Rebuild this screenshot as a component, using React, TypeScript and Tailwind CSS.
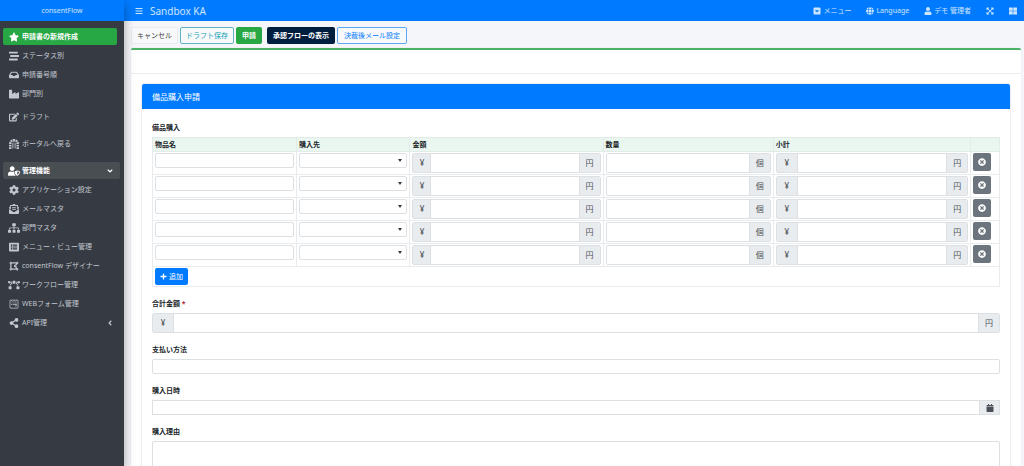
import { useState, type ReactNode } from "react";
import {
    FaStar, FaStream, FaInbox, FaIndustry, FaEdit, FaDungeon, FaUserShield, FaCog, FaEnvelopeOpenText,
    FaSitemap, FaListAlt, FaDrawPolygon, FaBezierCurve, FaWpforms, FaShareAlt, FaAngleDown, FaAngleLeft,
    FaBars, FaCaretSquareDown, FaGlobe, FaUser, FaExpandArrowsAlt, FaThLarge, FaPlus, FaTimesCircle, FaCalendar,
} from "react-icons/fa";
import type { IconType } from "react-icons";

interface MenuItem {
    label: string;
    icon: IconType;
    wide?: boolean; // ícones 640x512 precisam de mais largura
}

const viewMenu: MenuItem[] = [
    { label: "ステータス別", icon: FaStream },
    { label: "申請番号順", icon: FaInbox },
    { label: "部門別", icon: FaIndustry },
];

const adminMenu: MenuItem[] = [
    { label: "アプリケーション設定", icon: FaCog },
    { label: "メールマスタ", icon: FaEnvelopeOpenText },
    { label: "部門マスタ", icon: FaSitemap, wide: true },
    { label: "メニュー・ビュー管理", icon: FaListAlt },
    { label: "consentFlow デザイナー", icon: FaDrawPolygon },
    { label: "ワークフロー管理", icon: FaBezierCurve, wide: true },
    { label: "WEBフォーム管理", icon: FaWpforms },
];

const NavLink = ({ item, className = "text-[#c2c7d0]", children }: { item: MenuItem; className?: string; children?: ReactNode }) => {
    const Icon = item.icon;
    return (
        <a href="#" className={`flex h-[17px] items-center rounded-xs pl-[5px] pr-[6px] ${className}`}>
            <span className="mr-[2px] flex w-[12px] shrink-0 justify-center">
                <Icon className={item.wide ? "size-[12px]" : "size-[10px]"} />
            </span>
            <span className="flex-1 whitespace-nowrap">{item.label}</span>
            {children}
        </a>
    );
};

const Sidebar = () => (
    <aside className="z-10 flex w-[124px] shrink-0 flex-col bg-[#363b43] shadow-[0_4px_10px_rgba(0,0,0,0.35)]">
        <a href="#" className="flex h-[21px] shrink-0 items-center justify-center bg-[#007bff] text-white/80">consentFlow</a>
        <nav className="flex flex-col gap-[2px] pl-[3px] pr-[4px] pt-[7px]">
            <NavLink item={{ label: "申請書の新規作成", icon: FaStar }} className="mr-[3px] bg-[#28a745] font-bold text-white" />
            {viewMenu.map((item) => <NavLink key={item.label} item={item} />)}
            <div className="pt-[4px]">
                <NavLink item={{ label: "ドラフト", icon: FaEdit }} />
            </div>
            <div className="pt-[8px]">
                <NavLink item={{ label: "ポータルへ戻る", icon: FaDungeon }} />
            </div>
            <div className="pt-[8px]">
                <NavLink item={{ label: "管理機能", icon: FaUserShield, wide: true }} className="bg-[#494e53] font-bold text-white">
                    <FaAngleDown className="size-[8px]" />
                </NavLink>
            </div>
            {adminMenu.map((item) => <NavLink key={item.label} item={item} />)}
            <NavLink item={{ label: "API管理", icon: FaShareAlt }}>
                <FaAngleLeft className="size-[8px]" />
            </NavLink>
        </nav>
    </aside>
);

const Topbar = () => (
    <header className="flex h-[21px] shrink-0 items-center bg-[#007bff] pl-[11px] pr-[7px] text-white/80">
        <button type="button" aria-label="Toggle"><FaBars className="size-[8px]" /></button>
        <h1 className="ml-[7px] text-[10px]">Sandbox KA</h1>
        <nav className="ml-auto flex items-center gap-[15px]">
            <a href="#" className="flex items-center gap-[2px]"><FaCaretSquareDown className="size-[8px]" />メニュー</a>
            <a href="#" className="flex items-center gap-[2px]"><FaGlobe className="size-[8px]" />Language</a>
            <a href="#" className="flex items-center gap-[2px]"><FaUser className="size-[8px]" />デモ 管理者</a>
            <a href="#" aria-label="Fullscreen"><FaExpandArrowsAlt className="size-[8px]" /></a>
            <a href="#" aria-label="Apps"><FaThLarge className="size-[8px]" /></a>
        </nav>
    </header>
);

const Toolbar = () => (
    <div className="flex h-[17px] shrink-0">
        <button type="button" className="rounded-xs border border-[#e9ebed] bg-[#f8f9fa] px-[5px] text-[#444444]">キャンセル</button>
        <button type="button" className="ml-[2px] rounded-xs border border-[#5fb5c4] bg-[#f8f9fa] px-[5px] text-[#17a2b8]">ドラフト保存</button>
        <button type="button" className="ml-[2px] rounded-xs bg-[#28a745] px-[6px] font-bold text-white">申請</button>
        <button type="button" className="ml-[5px] rounded-xs bg-[#001f3f] px-[6px] font-bold text-white">承認フローの表示</button>
        <button type="button" className="ml-[2px] rounded-xs border border-[#5ba7f5] bg-[#f8f9fa] px-[6px] text-[#007bff]">決裁後メール設定</button>
    </div>
);

interface UnitInputProps {
    id?: string;
    label?: string;
    prefix?: string;
    suffix: string;
    wide?: boolean;
}

const UnitInput = ({ id, label, prefix, suffix, wide }: UnitInputProps) => {
    const addon = "flex shrink-0 items-center justify-center bg-[#e9ecef] text-[8px] text-[#495057]";
    return (
        <div className="flex h-[20px] overflow-hidden rounded-xs border border-[#dde0e3]">
            {prefix && <span className={`${addon} border-r border-[#dde0e3] ${wide ? "w-[21px]" : "w-[18px]"}`}>{prefix}</span>}
            <input id={id} aria-label={label} type="text" className="w-0 min-w-0 flex-1 bg-white px-1 outline-none" />
            <span className={`${addon} w-[21px] border-l border-[#dde0e3]`}>{suffix}</span>
        </div>
    );
};

const columns = [
    { label: "物品名", width: "w-[17%]" },
    { label: "購入先", width: "w-[13.4%]" },
    { label: "金額", width: "w-[22.8%]" },
    { label: "数量", width: "w-[20.1%]" },
    { label: "小計", width: "w-[23.3%]" },
    { label: "", width: "w-[3.4%]" },
];

const ItemTable = () => {
    const [rows, setRows] = useState<number[]>([1, 2, 3, 4, 5]);

    const addRow = () => setRows([...rows, Math.max(0, ...rows) + 1]);
    const removeRow = (id: number) => setRows(rows.filter((row) => row !== id));

    const cell = "border border-[#e9ecef] px-[2px] py-px align-top";

    return (
        <table className="w-full table-fixed border-collapse">
            <thead>
                <tr className="h-[14px] bg-[#eaf7f1] text-left">
                    {columns.map((column) => (
                        <th key={column.label} className={`border border-[#e3ebe8] px-[2px] ${column.width}`}>{column.label}</th>
                    ))}
                </tr>
            </thead>
            <tbody>
                {rows.map((id) => (
                    <tr key={id} className="h-[23px]">
                        <td className={cell}>
                            <input type="text" aria-label="物品名" className="block h-[15px] w-full rounded-xs border border-[#dde0e3] px-1" />
                        </td>
                        <td className={cell}>
                            <div className="relative">
                                <select aria-label="購入先" className="block h-[15px] w-full appearance-none rounded-xs border border-[#dde0e3] bg-white px-1">
                                    <option></option>
                                </select>
                                <span className="pointer-events-none absolute right-[5px] top-[6px] border-x-2 border-t-3 border-x-transparent border-t-[#343a40]" />
                            </div>
                        </td>
                        <td className={cell}><UnitInput label="金額" prefix="¥" suffix="円" /></td>
                        <td className={cell}><UnitInput label="数量" suffix="個" /></td>
                        <td className={cell}><UnitInput label="小計" prefix="¥" suffix="円" wide /></td>
                        <td className={cell}>
                            <button type="button" aria-label="削除" onClick={() => removeRow(id)} className="flex h-[18px] w-[18px] items-center justify-center rounded-xs bg-[#6c757d] text-white">
                                <FaTimesCircle className="size-[8px]" />
                            </button>
                        </td>
                    </tr>
                ))}
                <tr>
                    <td colSpan={6} className="border border-[#e9ecef] px-[2px] py-px">
                        <button type="button" onClick={addRow} className="flex h-[17px] items-center gap-[2px] rounded-xs bg-[#007bff] px-[5px] text-white">
                            <FaPlus className="size-[7px]" />追加
                        </button>
                    </td>
                </tr>
            </tbody>
        </table>
    );
};

const App = () => {
    return (
        <div className="flex h-screen overflow-hidden bg-[#f4f6f9] font-['Noto_Sans','Noto_Sans_CJK_JP',sans-serif] text-[7px] leading-[10px] text-[#212529]">
            <Sidebar />
            <div className="flex min-w-0 flex-1 flex-col">
                <Topbar />
                <main className="flex min-h-0 flex-1 flex-col overflow-y-auto pl-[7px] pr-[3px] pt-[6px] [scrollbar-width:none]">
                    <Toolbar />
                    <section className="mt-[4px] shrink-0 grow rounded-t-xs border-t-2 border-[#4db267] bg-white shadow-[0_0_1px_rgba(0,0,0,0.2)]">
                        <div className="h-[24px] border-b border-[#ececec]" />
                        <form className="mx-[11px] mt-[10px] rounded-t-xs bg-white shadow-[0_0_2px_rgba(0,0,0,0.25)]" onSubmit={(e) => e.preventDefault()}>
                            <h2 className="flex h-[25px] items-center rounded-t-xs bg-[#007bff] px-[10px] text-[8px] text-white">備品購入申請</h2>
                            <div className="px-[10px] pb-[10px] pt-[14px]">
                                <p className="mb-[4px] font-bold">備品購入</p>
                                <ItemTable />
                                <label htmlFor="total" className="mb-[4px] mt-[12px] block font-bold">
                                    合計金額 <span className="text-[#b02a37]">*</span>
                                </label>
                                <UnitInput id="total" prefix="¥" suffix="円" wide />
                                <label htmlFor="payment" className="mb-[4px] mt-[12px] block font-bold">支払い方法</label>
                                <input id="payment" type="text" className="block h-[15px] w-full rounded-xs border border-[#dde0e3] px-1" />
                                <label htmlFor="date" className="mb-[4px] mt-[12px] block font-bold">購入日時</label>
                                <div className="flex h-[15px] border border-[#dde0e3]">
                                    <input id="date" type="text" className="min-w-0 flex-1 px-1" />
                                    <button type="button" aria-label="カレンダー" className="flex w-[20px] items-center justify-center border-l border-[#dde0e3] bg-[#e9ecef] text-[#495057]">
                                        <FaCalendar className="size-[8px]" />
                                    </button>
                                </div>
                                <label htmlFor="reason" className="mb-[4px] mt-[12px] block font-bold">購入理由</label>
                                <textarea id="reason" className="block h-[50px] w-full rounded-xs border border-[#dde0e3] p-1" />
                            </div>
                        </form>
                    </section>
                </main>
            </div>
        </div>
    );
};

export default App;
